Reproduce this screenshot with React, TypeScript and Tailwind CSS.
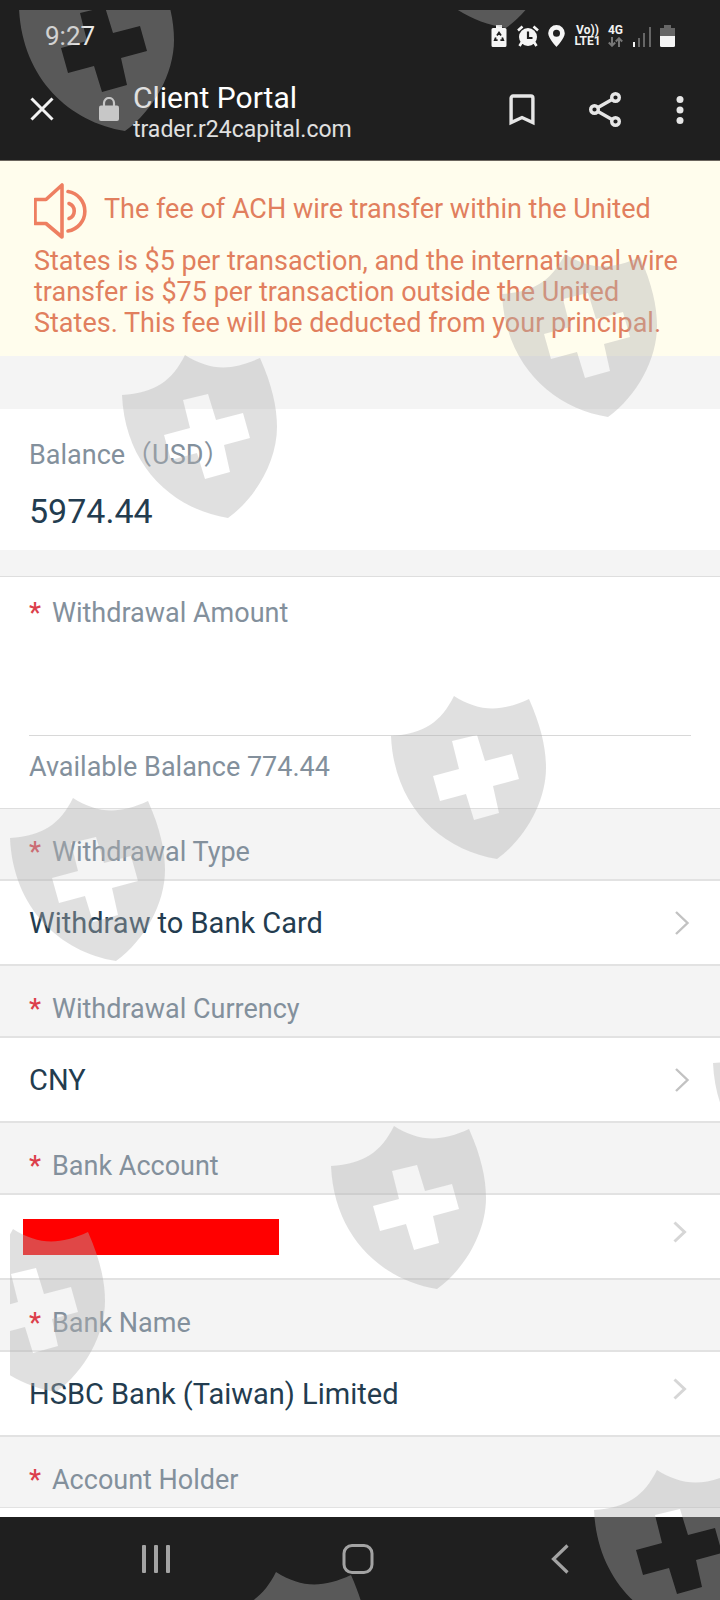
import { useId, useState } from 'react';

const WATERMARKS = [
  { x: 19, y: -32 },
  { x: 400, y: -135 },
  { x: 502, y: 254 },
  { x: 122, y: 355 },
  { x: 391, y: 696 },
  { x: 10, y: 798 },
  { x: 713, y: 1023 },
  { x: 331, y: 1126 },
  { x: -50, y: 1229 },
  { x: 594, y: 1470 },
  { x: 213, y: 1572 },
];

interface FieldRow {
  label: string;
  value: string | null;
  muted?: boolean;
}

const FIELDS: FieldRow[] = [
  { label: 'Withdrawal Type', value: 'Withdraw to Bank Card' },
  { label: 'Withdrawal Currency', value: 'CNY' },
  { label: 'Bank Account', value: null, muted: true },
  { label: 'Bank Name', value: 'HSBC Bank (Taiwan) Limited', muted: true },
];

function StatusBar() {
  return (
    <div className="flex h-[72px] items-center justify-between pr-[45px] pl-[45px] text-[#f2f2f2]">
      <span className="text-[26px] leading-8 text-[#e8e8e8]">9:27</span>
      <div className="flex items-center">
        {/* battery saver */}
        <svg className="mr-[10px] h-[22px] w-4" viewBox="0 0 16 22" fill="none">
          <path d="M5 0h6v3h3a1.500 1.500 0 0 1 1.500 1.500V20.500A1.500 1.500 0 0 1 14 22H2a1.500 1.500 0 0 1-1.500-1.500V4.500A1.500 1.500 0 0 1 2 3h3z" fill="#f5f5f5" />
          <path d="M6 10.500 8 7.500l2 3M11.200 12.500l1 2.700H9.400M6.600 15.200H3.800l1-2.700" stroke="#1f1f1f" strokeWidth="1.800" />
        </svg>
        <svg className="mr-[9px] h-[22px] w-[22px]" viewBox="0 0 22 22" fill="none">
          <circle cx="11" cy="12" r="9" fill="#f5f5f5" />
          <path d="M1 5.500 5.500 1.500M21 5.500l-4.500-4M5 17 2.500 21M17 17l2.500 4" stroke="#f5f5f5" strokeWidth="2.600" />
          <path d="M11 6.500V13h4.500" stroke="#1f1f1f" strokeWidth="2.200" />
        </svg>
        <svg className="mr-[9px] h-[22px] w-[17px]" viewBox="0 0 17 22">
          <path fillRule="evenodd" d="M8.500 0A8.300 8.300 0 0 0 .2 8.300C.2 13.500 8.500 22 8.500 22s8.300-8.500 8.300-13.700A8.300 8.300 0 0 0 8.500 0zm0 4.700a3.500 3.500 0 1 1 0 7 3.500 3.500 0 0 1 0-7z" fill="#f5f5f5" />
        </svg>
        <div className="mr-[6px] flex w-[27px] flex-col items-center text-[12px] leading-[11px] font-bold">
          <span>Vo))</span>
          <span>LTE1</span>
        </div>
        <div className="mr-2 flex w-[17px] flex-col items-center text-[12px] leading-[11px] font-bold">
          <span>4G</span>
          <svg className="mt-px h-[10px] w-[15px]" viewBox="0 0 15 10" fill="none" stroke="#777" strokeWidth="2">
            <path d="M4 0v8.500M.8 5.500 4 8.700l3.200-3.200M11 10V1.500M7.800 4.500 11 1.300l3.200 3.200" />
          </svg>
        </div>
        <svg className="mr-2 h-[21px] w-5" viewBox="0 0 20 21">
          <path d="M1 16h2v5H1z" fill="#f5f5f5" />
          <path d="M6 12h2v9H6zM11 7h2v14h-2zM17 1h2v20h-2z" fill="#666" />
        </svg>
        <svg className="h-[22px] w-[15px]" viewBox="0 0 15 22">
          <path d="M4 0h7v3h4v8H0V3h4z" fill="#666" />
          <path d="M0 11h15v9.500a1.500 1.500 0 0 1-1.500 1.500h-12A1.500 1.500 0 0 1 0 20.500z" fill="#f5f5f5" />
        </svg>
      </div>
    </div>
  );
}

function BrowserBar() {
  return (
    <div className="flex h-[88px] items-start pr-[35px] pl-[30px]">
      <button aria-label="Close" className="mt-[25px]">
        <svg className="h-6 w-6" viewBox="0 0 24 24" fill="none" stroke="#f2f2f2" strokeWidth="3">
          <path d="M1.500 1.500 22.500 22.500M22.500 1.500 1.500 22.500" />
        </svg>
      </button>
      <svg className="mt-[25px] ml-[45px] h-6 w-5" viewBox="0 0 20 24">
        <rect y="8.500" width="20" height="15.500" rx="2" fill="#d6d6d6" />
        <path d="M5 9V6a5 5 0 0 1 10 0v3" fill="none" stroke="#d6d6d6" strokeWidth="2.200" />
      </svg>
      <div className="mt-2 ml-[14px] flex-1">
        <h1 className="text-[30px] leading-9 text-white">Client Portal</h1>
        <p className="text-[23px] leading-7 text-[#e0e0e0]">trader.r24capital.com</p>
      </div>
      <button aria-label="Bookmark" className="mt-[22px]">
        <svg className="h-8 w-[26px]" viewBox="0 0 26 32" fill="none" stroke="#e6e6e6" strokeWidth="3.400">
          <path d="M2.100 28.500V4A2 2 0 0 1 4.100 2H21.900A2 2 0 0 1 23.900 4V28.500L13 23.500z" />
        </svg>
      </button>
      <button aria-label="Share" className="mt-5 ml-[54px]">
        <svg className="h-[35px] w-8" viewBox="0 0 32 35" fill="none" stroke="#e6e6e6" strokeWidth="3.400">
          <circle cx="5.500" cy="17.500" r="3.800" />
          <circle cx="26.500" cy="5.500" r="3.800" />
          <circle cx="26.500" cy="29.500" r="3.800" />
          <path d="M9 15.500 23 7.500M9 19.500l14 8" />
        </svg>
      </button>
      <button aria-label="More options" className="mt-6 ml-[54px]">
        <svg className="h-7 w-[10px]" viewBox="0 0 10 28" fill="#e6e6e6">
          <circle cx="5" cy="3.500" r="3.500" />
          <circle cx="5" cy="14" r="3.500" />
          <circle cx="5" cy="24.500" r="3.500" />
        </svg>
      </button>
    </div>
  );
}

function Notice() {
  return (
    <p className="bg-[#fffded] px-[34px] pt-[22px] pb-[17px] text-[27px] leading-[31px] text-[#e17f5e]">
      <svg className="mr-[14px] mb-[7px] inline-block h-14 w-14 align-[-28px]" viewBox="0 0 56 56" fill="none" stroke="#ee7f61" strokeWidth="3.600" strokeLinejoin="round">
        <path d="M1 16.500H12L28 2V54L12 40.500H1z" />
        <path d="M34 8.500a20 20 0 0 1 0 39.500" strokeLinecap="round" />
        <path d="M35 20.500a8 8 0 0 1 0 15" strokeLinecap="round" />
      </svg>
      The fee of ACH wire transfer within the United States is $5 per transaction, and the international wire
      transfer is $75 per transaction outside the United States. This fee will be deducted from your principal.
    </p>
  );
}

function LabelText({ children }: { children: string }) {
  return (
    <>
      <span className="inline-block w-[23px] font-medium text-[#dc3f4b]">*</span>
      {children}
    </>
  );
}

function Chevron({ muted }: { muted?: boolean }) {
  if (muted) {
    return (
      <svg className="mr-[33px] mb-[10px] h-[22px] w-[14px]" viewBox="0 0 14 22" fill="none" stroke="#d6d6d6" strokeWidth="3">
        <path d="M1.500 1.500 11.500 11 1.500 20.500" />
      </svg>
    );
  }
  return (
    <svg className="mr-[30px] h-6 w-4" viewBox="0 0 16 24" fill="none" stroke="#c2c2c2" strokeWidth="2.400">
      <path d="M2 1 13.500 12 2 23" />
    </svg>
  );
}

function SelectField({ label, value, muted }: FieldRow) {
  const id = useId();
  return (
    <div>
      <label htmlFor={id} className="flex h-[70px] items-end pb-[11px] pl-[29px] text-[27px] leading-8 text-[#83909c]">
        <LabelText>{label}</LabelText>
      </label>
      <button
        id={id}
        type="button"
        className="flex h-[87px] w-full items-center justify-between border-y-2 border-[#e2e2e2] bg-white text-left text-[29px] leading-8 text-[#233c4f]"
      >
        {value ? (
          <span className="pl-[29px]">{value}</span>
        ) : (
          <span className="ml-[23px] h-9 w-64 bg-[#ff0000]" />
        )}
        <Chevron muted={muted} />
      </button>
    </div>
  );
}

function NavBar() {
  return (
    <nav className="grid h-[84px] grid-cols-3 items-center justify-items-center bg-[#1f1f1f] pr-[59px] pl-[55px]">
      <button aria-label="Recent apps">
        <svg className="h-[30px] w-7" viewBox="0 0 28 30" fill="#a3a3a3">
          <rect x="0" y="1" width="4" height="28" rx="1" />
          <rect x="12" y="1" width="4" height="28" rx="1" />
          <rect x="24" y="1" width="4" height="28" rx="1" />
        </svg>
      </button>
      <button aria-label="Home">
        <svg className="h-[30px] w-8" viewBox="0 0 32 30" fill="none" stroke="#a3a3a3" strokeWidth="3">
          <rect x="2" y="1.500" width="28" height="27" rx="8" />
        </svg>
      </button>
      <button aria-label="Back">
        <svg className="h-[30px] w-[18px]" viewBox="0 0 18 30" fill="none" stroke="#a3a3a3" strokeWidth="3.200">
          <path d="M16.500 1.500 2.500 15l14 13.500" />
        </svg>
      </button>
    </nav>
  );
}

function Watermark() {
  return (
    <div className="pointer-events-none absolute top-[10px] right-0 bottom-0 left-[10px] overflow-hidden">
      <svg className="h-full w-full" fill="#b1b1b1" fillOpacity="0.4" aria-hidden="true">
        {WATERMARKS.map(({ x, y }) => (
          <path
            key={`${x}-${y}`}
            transform={`translate(${x - 10} ${y - 10})`}
            fillRule="evenodd"
            d="M0 40C33 38 50 26 63 0C88 16 110 16 138 3C150 30 155 52 155 72C155 105 135 142 106 163C50 154 3 110 0 40zM61 45L68 73L42 80L49 105L75 98L83 124L108 117L102 90L128 83L121 58L94 65L86 39z"
          />
        ))}
      </svg>
    </div>
  );
}

export default function App() {
  const [amount, setAmount] = useState('');

  return (
    <div className="relative w-full overflow-hidden bg-[#f4f4f4] font-['Roboto','Noto_Sans_CJK_SC',sans-serif]">
      <header className="border-b border-[#6b665e] bg-[#1f1f1f]">
        <StatusBar />
        <BrowserBar />
      </header>

      <main>
        <Notice />

        <section className="mt-[53px] bg-white px-[29px] pt-[30px] pb-[18px]">
          <h2 className="text-[27px] leading-8 text-[#83909c]">Balance（USD）</h2>
          <p className="mt-[19px] text-[34px] leading-[42px] text-[#233c4f]">5974.44</p>
        </section>

        <section className="mt-[26px] border-y border-[#dedede] bg-white px-[29px] pt-5 pb-[25px] text-[27px] leading-8 text-[#83909c]">
          <label htmlFor="amount" className="block">
            <LabelText>Withdrawal Amount</LabelText>
          </label>
          <input
            id="amount"
            type="text"
            inputMode="decimal"
            value={amount}
            onChange={e => setAmount(e.target.value)}
            className="mt-[35px] block h-[72px] w-full border-b border-[#d8d8d8] text-[#233c4f] outline-none"
          />
          <p className="mt-[15px]">Available Balance 774.44</p>
        </section>

        {FIELDS.map(field => (
          <SelectField key={field.label} {...field} />
        ))}

        <div>
          <label htmlFor="holder" className="flex h-[70px] items-end pb-[11px] pl-[29px] text-[27px] leading-8 text-[#83909c]">
            <LabelText>Account Holder</LabelText>
          </label>
          <input id="holder" type="text" className="block h-[10px] w-full border-t border-[#e2e2e2] bg-white outline-none" />
        </div>
      </main>

      <NavBar />
      <Watermark />
    </div>
  );
}
